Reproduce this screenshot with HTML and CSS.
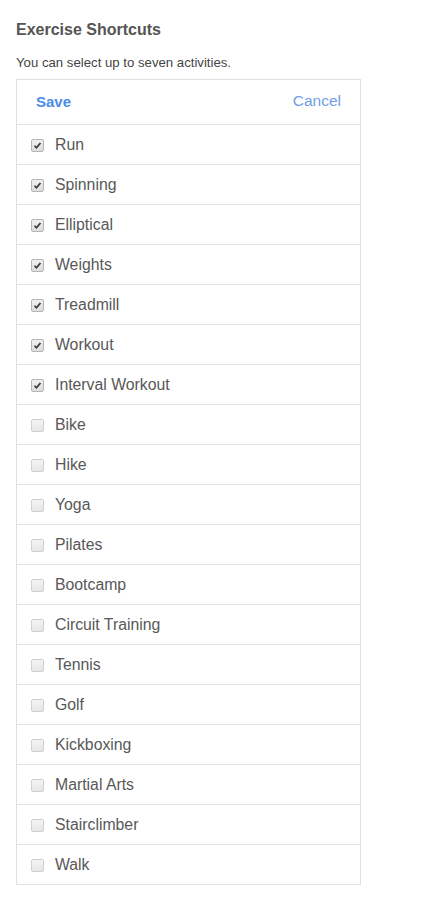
FILE: index.html
```html
<!DOCTYPE html>
<html>
<head>
<meta charset="utf-8">
<link rel="stylesheet" href="styles.css">
</head>
<body>
<h1 class="title">Exercise Shortcuts</h1>
<p class="subtitle">You can select up to seven activities.</p>
<div class="panel">
  <div class="panel-head">
    <span class="save">Save</span>
    <span class="cancel">Cancel</span>
  </div>
  <ul class="list">
    <li class="row"><span class="box on"><svg viewBox="0 0 13 13" width="13" height="13"><path d="M3 6.8 L5.3 9.2 L10 3.6" fill="none" stroke="#3c3c3c" stroke-width="2.1"/></svg></span><span class="label">Run</span></li>
    <li class="row"><span class="box on"><svg viewBox="0 0 13 13" width="13" height="13"><path d="M3 6.8 L5.3 9.2 L10 3.6" fill="none" stroke="#3c3c3c" stroke-width="2.1"/></svg></span><span class="label">Spinning</span></li>
    <li class="row"><span class="box on"><svg viewBox="0 0 13 13" width="13" height="13"><path d="M3 6.8 L5.3 9.2 L10 3.6" fill="none" stroke="#3c3c3c" stroke-width="2.1"/></svg></span><span class="label">Elliptical</span></li>
    <li class="row"><span class="box on"><svg viewBox="0 0 13 13" width="13" height="13"><path d="M3 6.8 L5.3 9.2 L10 3.6" fill="none" stroke="#3c3c3c" stroke-width="2.1"/></svg></span><span class="label">Weights</span></li>
    <li class="row"><span class="box on"><svg viewBox="0 0 13 13" width="13" height="13"><path d="M3 6.8 L5.3 9.2 L10 3.6" fill="none" stroke="#3c3c3c" stroke-width="2.1"/></svg></span><span class="label">Treadmill</span></li>
    <li class="row"><span class="box on"><svg viewBox="0 0 13 13" width="13" height="13"><path d="M3 6.8 L5.3 9.2 L10 3.6" fill="none" stroke="#3c3c3c" stroke-width="2.1"/></svg></span><span class="label">Workout</span></li>
    <li class="row"><span class="box on"><svg viewBox="0 0 13 13" width="13" height="13"><path d="M3 6.8 L5.3 9.2 L10 3.6" fill="none" stroke="#3c3c3c" stroke-width="2.1"/></svg></span><span class="label">Interval Workout</span></li>
    <li class="row"><span class="box"></span><span class="label">Bike</span></li>
    <li class="row"><span class="box"></span><span class="label">Hike</span></li>
    <li class="row"><span class="box"></span><span class="label">Yoga</span></li>
    <li class="row"><span class="box"></span><span class="label">Pilates</span></li>
    <li class="row"><span class="box"></span><span class="label">Bootcamp</span></li>
    <li class="row"><span class="box"></span><span class="label">Circuit Training</span></li>
    <li class="row"><span class="box"></span><span class="label">Tennis</span></li>
    <li class="row"><span class="box"></span><span class="label">Golf</span></li>
    <li class="row"><span class="box"></span><span class="label">Kickboxing</span></li>
    <li class="row"><span class="box"></span><span class="label">Martial Arts</span></li>
    <li class="row"><span class="box"></span><span class="label">Stairclimber</span></li>
    <li class="row"><span class="box"></span><span class="label">Walk</span></li>
  </ul>
</div>
</body>
</html>
```
FILE: styles.css
```css
html, body {
  margin: 0;
  background: #fff;
}
body {
  padding: 0 16px;
  font-family: "Liberation Sans", Arial, sans-serif;
  color: #555;
}
.title {
  margin: 20px 0 0;
  font-size: 16px;
  line-height: 20px;
  font-weight: bold;
  color: #555;
}
.subtitle {
  margin: 15px 0 0;
  font-size: 13.2px;
  line-height: 16px;
  color: #444;
}
.panel {
  margin-top: 8px;
  width: 343px;
  border: 1px solid #e1e1e1;
}
.panel-head {
  height: 42px;
  padding: 0 19px 2px;
  display: flex;
  align-items: center;
  justify-content: space-between;
  border-bottom: 1px solid #e1e1e1;
  font-size: 15px;
}
.save {
  font-weight: bold;
  color: #4a8ce6;
}
.cancel {
  font-size: 15.5px;
  color: #6f9ee6;
}
.list {
  list-style: none;
  margin: 0;
  padding: 0;
}
.row {
  height: 39px;
  display: flex;
  align-items: center;
  padding-left: 14px;
  border-bottom: 1px solid #e1e1e1;
  font-size: 15.8px;
  color: #585858;
}
.row:last-child {
  border-bottom: none;
}
.box {
  width: 11px;
  height: 11px;
  border: 1px solid #cfcfcf;
  border-radius: 2px;
  background: linear-gradient(#f4f4f4, #e6e6e6);
  display: flex;
  align-items: center;
  justify-content: center;
  margin: 1px 11px 0 0;
  flex: none;
}
.box.on {
  border-color: #b5b5b5;
  background: linear-gradient(#efefef, #dcdcdc);
}
.box svg {
  display: block;
  width: 11px;
  height: 11px;
}
```
